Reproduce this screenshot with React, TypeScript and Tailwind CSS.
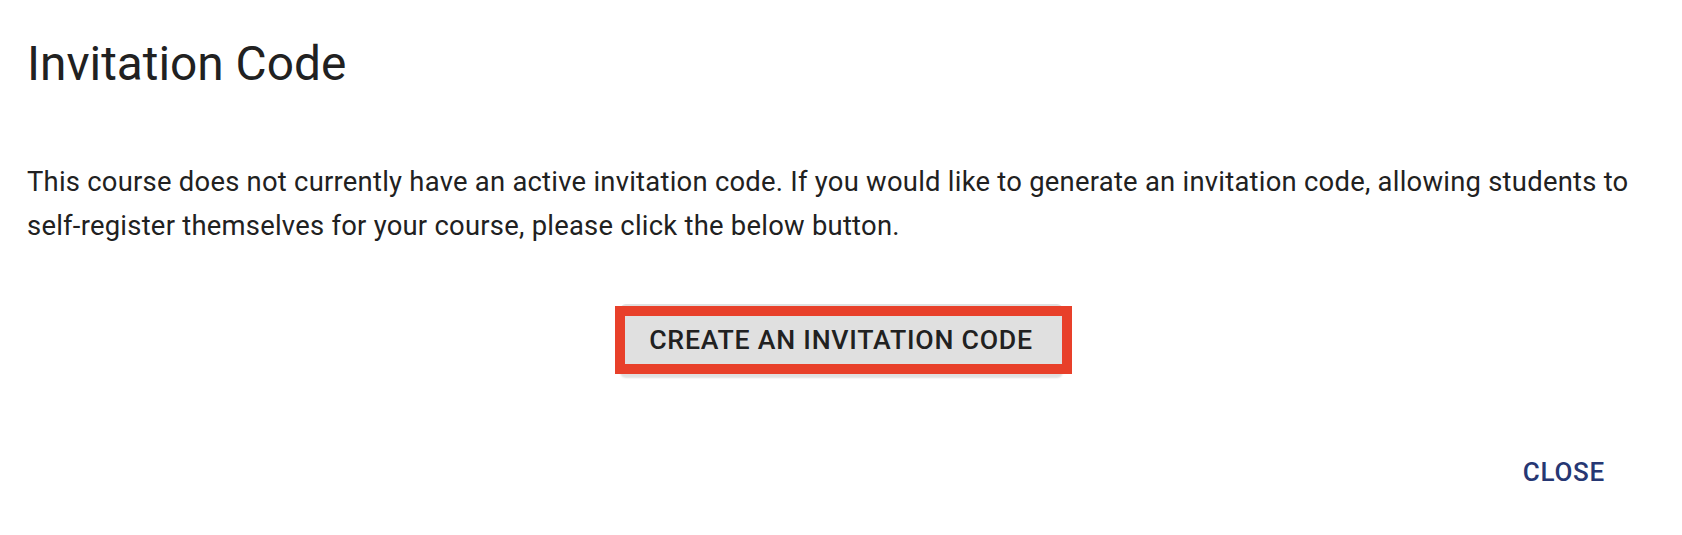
import React from "react";

export default function App() {
  return (
    <div
      className="w-[1682px] h-[535px] bg-white text-[#212121] relative overflow-hidden"
      style={{ fontFamily: "Roboto, 'Noto Sans', sans-serif" }}
    >
      <div className="pl-[27px] pr-[27px]">
        <h1 className="pt-[36px] text-[47.8px] leading-[56px] font-normal">Invitation Code</h1>
        <p className="mt-[69px] text-[27.4px] leading-[43.5px] tracking-[0.25px]">
          This course does not currently have an active invitation code. If you would like to generate an invitation code, allowing students to self-register themselves for your course, please click the below button.
        </p>
        <div className="flex justify-center mt-[56px]">
          <div className="relative">
            <button className="w-[443px] h-[72px] bg-[#e0e0e0] rounded-[6px] shadow-[0_2px_2px_rgba(0,0,0,0.12)] text-[26.7px] font-medium tracking-[0.76px] uppercase text-[#212121]">
              Create an Invitation Code
            </button>
            <div className="absolute left-[-5px] right-[-9px] top-[2px] bottom-[2px] border-[10px] border-[#e8402a] pointer-events-none" />
          </div>
        </div>
        <div className="flex justify-end mt-[76px] pr-[50px]">
          <button className="text-[26px] font-medium tracking-[0.74px] text-[#263773] leading-[40px]">CLOSE</button>
        </div>
      </div>
    </div>
  );
}
